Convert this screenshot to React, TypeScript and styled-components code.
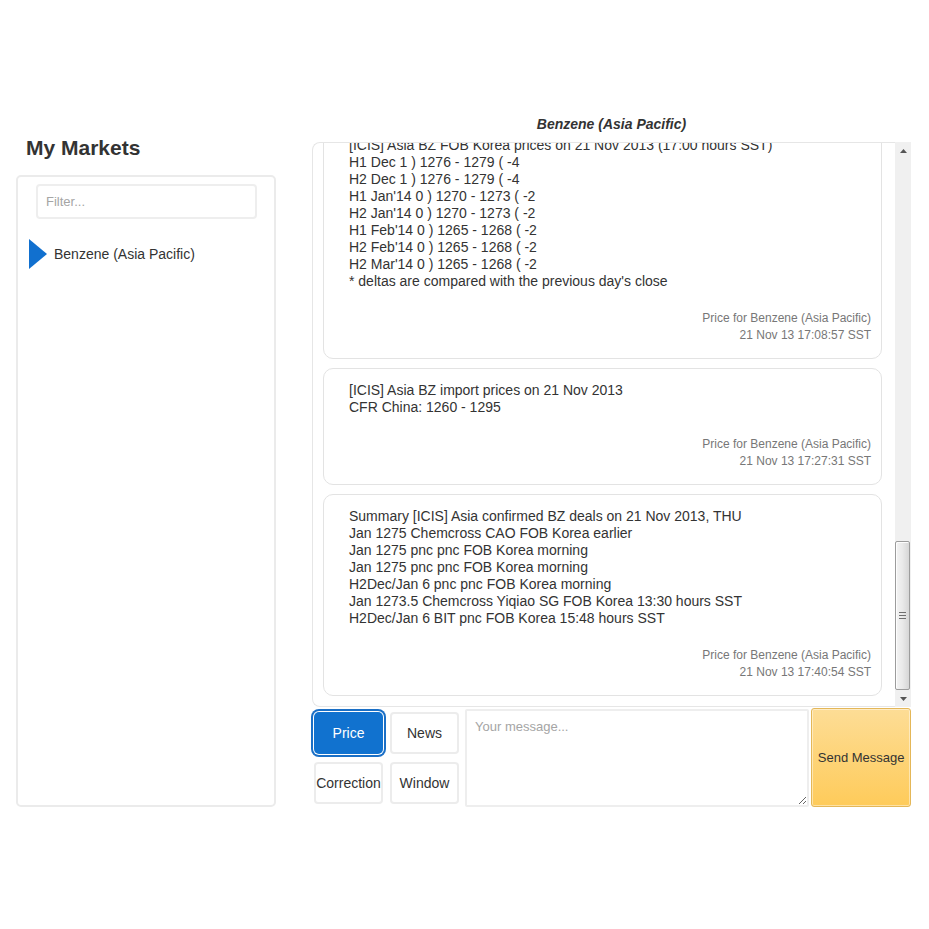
import React, { useLayoutEffect, useRef } from "react";
import styled, { createGlobalStyle } from "styled-components";

const GlobalStyle = createGlobalStyle`
  html, body { margin: 0; padding: 0; background: #fff; }
  body {
    font-family: "Liberation Sans", Arial, sans-serif;
    color: #333;
  }
  * { box-sizing: border-box; }
`;

const Page = styled.div`
  display: flex;
  gap: 36px;
  padding: 115px 18px 0 16px;
  height: 807px;
`;

const LeftCol = styled.div`
  width: 260px;
  display: flex;
  flex-direction: column;
  padding-top: 21px;
`;

const Heading = styled.h3`
  margin: 0 0 15px 10px;
  font-size: 21px;
  line-height: 24px;
  font-weight: bold;
  color: #333;
`;

const Panel = styled.div`
  flex: 1;
  border: 2px solid #ebebeb;
  border-radius: 5px;
  padding-top: 7px;
`;

const FilterInput = styled.input`
  display: block;
  width: 221px;
  height: 35px;
  margin-left: 18px;
  border: 2px solid #eeeeee;
  border-radius: 4px;
  padding: 0 8px;
  font-family: "Liberation Sans", Arial, sans-serif;
  font-size: 13px;
  color: #333;
  outline: none;
  &::placeholder { color: #a5a5a5; }
`;

const MarketItem = styled.div`
  display: flex;
  align-items: center;
  gap: 7px;
  margin-top: 20px;
  padding-left: 11px;
  font-size: 14px;
  line-height: 30px;
  color: #333;
`;

const Triangle = styled.span`
  width: 0;
  height: 0;
  border-top: 15px solid transparent;
  border-bottom: 15px solid transparent;
  border-left: 18px solid #1170cf;
`;

const RightCol = styled.div`
  width: 599px;
  display: flex;
  flex-direction: column;
`;

const Title = styled.div`
  text-align: center;
  font-size: 14px;
  line-height: 18px;
  font-weight: bold;
  font-style: italic;
  color: #333;
  margin-bottom: 9px;
`;

const ChatBox = styled.div`
  flex: 1;
  display: flex;
  min-height: 0;
`;

const ScrollArea = styled.div`
  flex: 1;
  overflow: hidden;
  border: 1px solid #e6e6e6;
  border-right: none;
  border-radius: 8px 0 0 8px;
  padding: 10px 13px 10px 10px;
  display: flex;
  flex-direction: column;
  gap: 9px;
`;

const Card = styled.div`
  flex-shrink: 0;
  background: #fff;
  border: 1px solid #e3e3e3;
  border-radius: 10px;
  padding: 13px 10px 14px 25px;
`;

const Body = styled.div`
  font-size: 14px;
  line-height: 17px;
  color: #333;
  white-space: pre-line;
`;

const Footer = styled.div`
  margin-top: 20px;
  text-align: right;
  font-size: 12px;
  line-height: 17px;
  color: #777;
`;

const ScrollBar = styled.div`
  width: 16px;
  background: #f0f0f0;
  display: flex;
  flex-direction: column;
`;

const ArrowBtn = styled.div`
  height: 17px;
  display: flex;
  align-items: center;
  justify-content: center;
  flex-shrink: 0;
`;

const Track = styled.div`
  flex: 1;
  display: flex;
  flex-direction: column;
  justify-content: flex-end;
`;

const Thumb = styled.div`
  width: 15px;
  height: 149px;
  border: 1px solid #9c9c9c;
  border-radius: 2px;
  background: linear-gradient(to right, #f4f4f4 0%, #e9e9e9 50%, #d6d6d6 100%);
  box-shadow: inset 1px 1px 0 #fdfdfd;
  display: flex;
  align-items: center;
  justify-content: center;
`;

const Grip = styled.div`
  width: 7px;
  height: 7px;
  background: repeating-linear-gradient(
    to bottom,
    #6e6e6e 0px,
    #6e6e6e 1px,
    transparent 1px,
    transparent 3px
  );
`;

const Composer = styled.div`
  height: 100px;
  display: flex;
`;

const ButtonGrid = styled.div`
  display: grid;
  grid-template-columns: 69px 69px;
  grid-template-rows: 42px 42px;
  column-gap: 7px;
  row-gap: 8px;
  margin: 5px 6px 0 2px;
`;

const TypeButton = styled.button<{ $active?: boolean }>`
  font-family: "Liberation Sans", Arial, sans-serif;
  font-size: 14px;
  padding: 0;
  cursor: pointer;
  border-radius: ${(p) => (p.$active ? "5px" : "4px")};
  border: ${(p) => (p.$active ? "none" : "2px solid #ececec")};
  background: ${(p) => (p.$active ? "#1172cf" : "#fff")};
  color: ${(p) => (p.$active ? "#fff" : "#333")};
  box-shadow: ${(p) =>
    p.$active ? "0 0 0 1px #fff, 0 0 0 3px #1a6fc6" : "none"};
  outline: none;
`;

const MessageInput = styled.textarea`
  width: 345px;
  margin-top: 2px;
  height: 98px;
  border: 2px solid #eeeeee;
  border-radius: 2px;
  padding: 8px 8px;
  font-family: "Liberation Sans", Arial, sans-serif;
  font-size: 13px;
  color: #333;
  resize: both;
  outline: none;
  &::placeholder { color: #a5a5a5; }
`;

const SendButton = styled.button`
  margin-left: 2px;
  margin-top: 1px;
  width: 100px;
  height: 99px;
  border: 1px solid #e4b758;
  border-radius: 3px;
  box-shadow: inset 0 0 0 1px rgba(255, 255, 255, 0.45);
  background: linear-gradient(to bottom, #fddd96 0%, #fecb5a 100%);
  font-family: "Liberation Sans", Arial, sans-serif;
  font-size: 13px;
  color: #333;
  padding: 0;
  cursor: pointer;
`;

type Message = { body: string; time: string };

const messages: Message[] = [
  {
    body: `[ICIS] Asia BZ FOB Korea prices on 21 Nov 2013 (17:00 hours SST)
H1 Dec 1 ) 1276 - 1279 ( -4
H2 Dec 1 ) 1276 - 1279 ( -4
H1 Jan'14 0 ) 1270 - 1273 ( -2
H2 Jan'14 0 ) 1270 - 1273 ( -2
H1 Feb'14 0 ) 1265 - 1268 ( -2
H2 Feb'14 0 ) 1265 - 1268 ( -2
H2 Mar'14 0 ) 1265 - 1268 ( -2
* deltas are compared with the previous day's close`,
    time: "21 Nov 13 17:08:57 SST",
  },
  {
    body: `[ICIS] Asia BZ import prices on 21 Nov 2013
CFR China: 1260 - 1295`,
    time: "21 Nov 13 17:27:31 SST",
  },
  {
    body: `Summary [ICIS] Asia confirmed BZ deals on 21 Nov 2013, THU
Jan 1275 Chemcross CAO FOB Korea earlier
Jan 1275 pnc pnc FOB Korea morning
Jan 1275 pnc pnc FOB Korea morning
H2Dec/Jan 6 pnc pnc FOB Korea morning
Jan 1273.5 Chemcross Yiqiao SG FOB Korea 13:30 hours SST
H2Dec/Jan 6 BIT pnc FOB Korea 15:48 hours SST`,
    time: "21 Nov 13 17:40:54 SST",
  },
];

const ArrowIcon = ({ down }: { down?: boolean }) => (
  <svg width="7" height="4" viewBox="0 0 7 4">
    <path d={down ? "M0 0 L7 0 L3.5 4 Z" : "M0 4 L7 4 L3.5 0 Z"} fill="#555" />
  </svg>
);

export default function App() {
  const scrollRef = useRef<HTMLDivElement>(null);

  useLayoutEffect(() => {
    const el = scrollRef.current;
    if (el) el.scrollTop = el.scrollHeight;
  }, []);

  return (
    <>
      <GlobalStyle />
      <Page>
        <LeftCol>
          <Heading>My Markets</Heading>
          <Panel>
            <FilterInput placeholder="Filter..." />
            <MarketItem>
              <Triangle />
              <span>Benzene (Asia Pacific)</span>
            </MarketItem>
          </Panel>
        </LeftCol>
        <RightCol>
          <Title>Benzene (Asia Pacific)</Title>
          <ChatBox>
            <ScrollArea ref={scrollRef}>
              {messages.map((m, i) => (
                <Card key={i}>
                  <Body>{m.body}</Body>
                  <Footer>
                    Price for Benzene (Asia Pacific)
                    <br />
                    {m.time}
                  </Footer>
                </Card>
              ))}
            </ScrollArea>
            <ScrollBar>
              <ArrowBtn>
                <ArrowIcon />
              </ArrowBtn>
              <Track>
                <Thumb>
                  <Grip />
                </Thumb>
              </Track>
              <ArrowBtn>
                <ArrowIcon down />
              </ArrowBtn>
            </ScrollBar>
          </ChatBox>
          <Composer>
            <ButtonGrid>
              <TypeButton $active>Price</TypeButton>
              <TypeButton>News</TypeButton>
              <TypeButton>Correction</TypeButton>
              <TypeButton>Window</TypeButton>
            </ButtonGrid>
            <MessageInput placeholder="Your message..." />
            <SendButton>Send Message</SendButton>
          </Composer>
        </RightCol>
      </Page>
    </>
  );
}
